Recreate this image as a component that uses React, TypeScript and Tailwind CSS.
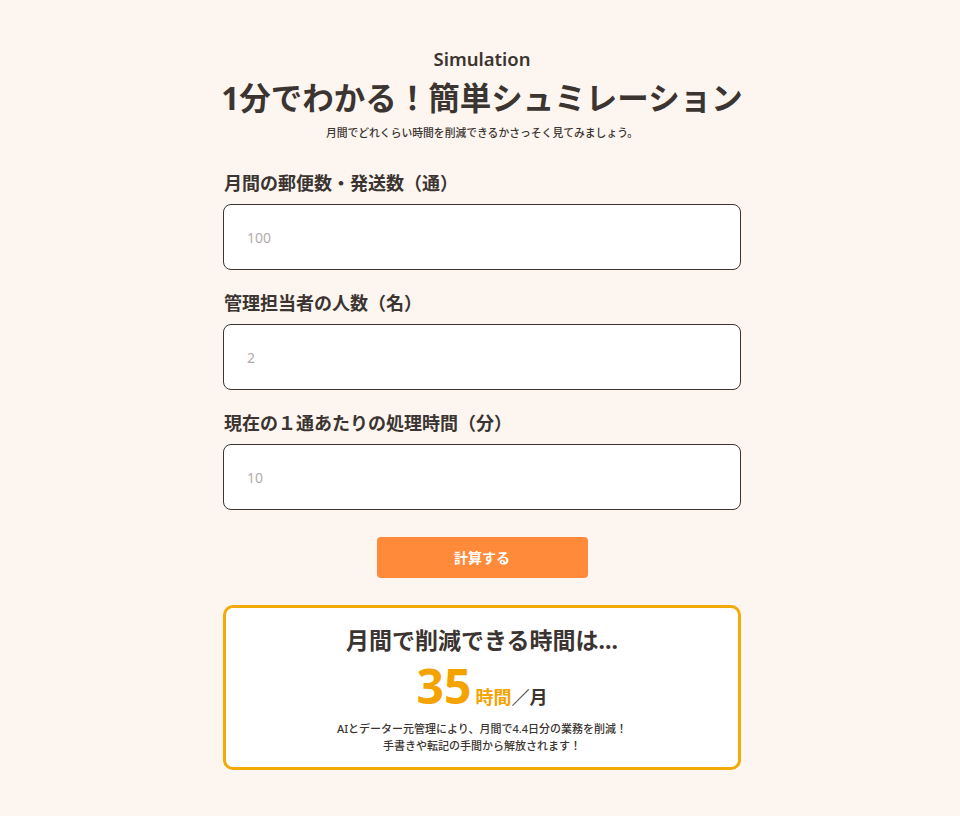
import React from "react";

const font = { fontFamily: '"Noto Sans", "Noto Sans CJK JP", sans-serif' };

function Field({ label, placeholder }: { label: string; placeholder: string }) {
  return (
    <div className="flex flex-col">
      <label className="text-[18px] leading-[27px] font-bold text-[#3b3431] pl-[1px]">{label}</label>
      <input
        className="mt-[7px] h-[66px] w-full rounded-[8px] border border-[#3b3431] bg-white px-[23px] text-[14px] text-[#3b3431] placeholder:text-[#b3abab] outline-none"
        placeholder={placeholder}
      />
    </div>
  );
}

export default function App() {
  return (
    <div className="min-h-screen bg-[#fdf6f0] text-[#3b3431]" style={font}>
      <div className="flex justify-center pl-[4px]">
        <div className="w-[518px] pt-[45px] pb-[46px] flex flex-col items-stretch">
          <p className="text-center text-[18.5px] leading-[27px] font-semibold">Simulation</p>
          <h1 className="mt-[6px] -mx-[10px] text-center text-[31.5px] leading-[40px] font-bold whitespace-nowrap">
            1分でわかる！簡単シュミレーション
          </h1>
          <p className="mt-[7px] text-center text-[10.8px] leading-[16px] font-medium">
            月間でどれくらい時間を削減できるかさっそく見てみましょう。
          </p>
          <div className="mt-[29px] flex flex-col gap-[20px]">
            <Field label="月間の郵便数・発送数（通）" placeholder="100" />
            <Field label="管理担当者の人数（名）" placeholder="2" />
            <Field label="現在の１通あたりの処理時間（分）" placeholder="10" />
          </div>
          <button className="mt-[27px] mx-auto h-[41px] w-[211px] rounded-[4px] bg-[#ff8a3a] text-white text-[14px] font-bold">
            計算する
          </button>
          <div className="mt-[27px] h-[165px] rounded-[10px] border-[3px] border-[#f2aa06] bg-white flex flex-col items-center pt-[17px]">
            <p className="text-[23px] leading-[30px] font-bold">月間で削減できる時間は...</p>
            <div className="mt-[5px] h-[52px] flex items-baseline leading-[52px]">
              <span className="text-[48px] font-bold text-[#f5a300] leading-[52px]">35</span>
              <span className="ml-[4px] text-[18px] font-bold text-[#f5a300] leading-none">時間</span>
              <span className="text-[18px] font-bold text-[#3b3431] leading-none">／月</span>
            </div>
            <p className="mt-[8px] text-center text-[11px] leading-[17px] font-medium">
              AIとデーター元管理により、月間で4.4日分の業務を削減！
              <br />
              手書きや転記の手間から解放されます！
            </p>
          </div>
        </div>
      </div>
    </div>
  );
}
